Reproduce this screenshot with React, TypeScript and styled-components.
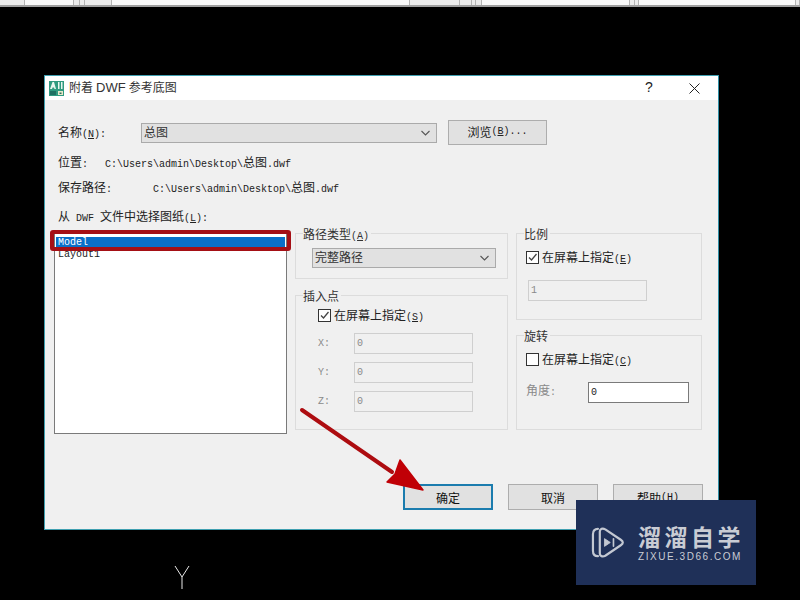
import React from 'react';
import styled, { createGlobalStyle } from 'styled-components';

const GlobalStyle = createGlobalStyle`
  html, body {
    margin: 0;
    padding: 0;
    background: #000;
  }
  body {
    font-family: "Noto Sans CJK SC", "Liberation Sans", sans-serif;
    font-size: 12px;
    color: #222;
  }
`;

const Screen = styled.div`
  position: relative;
  width: 800px;
  height: 600px;
  overflow: hidden;
  background: #000;
`;

const TopStrip = styled.div`
  display: flex;
  height: 5px;
  background: #f0f0f0;
  border-bottom: 2px solid #a0a0a0;
`;

const StripCell = styled.div<{ $w: number; $white?: boolean }>`
  width: ${(p) => p.$w}px;
  background: ${(p) => (p.$white ? '#fafafa' : '#ececec')};
  border-right: 1px solid #b4b4b4;
  box-sizing: border-box;
`;

const Dialog = styled.div`
  box-sizing: border-box;
  width: 675px;
  height: 455px;
  margin: 68px 0 0 44px;
  display: flex;
  flex-direction: column;
  background: #f0f0f0;
  border: 1px solid #3f9fb0;
  border-right-color: #2f8fa6;
`;

const TitleBar = styled.div`
  height: 24px;
  flex: none;
  display: flex;
  align-items: center;
  background: #fff;
  padding-left: 4px;
`;

const TitleText = styled.span`
  margin: 0 0 3px 5px;
  font-size: 12px;
  color: #333;
`;

const TitleLatin = styled.span`
  margin: 0 3px;
  font-family: "Liberation Sans", sans-serif;
  font-size: 13px;
`;

const TitleHelp = styled.span`
  margin: 0 0 2px auto;
  width: 12px;
  text-align: center;
  font-family: "Liberation Sans", sans-serif;
  font-size: 14px;
  color: #222;
`;

const TitleClose = styled.svg`
  margin: 0 18px 0 34px;
  flex: none;
`;

const Mono = styled.span`
  font-family: "Liberation Mono", monospace;
  font-size: 10px;
`;

const Underlined = styled.span`
  text-decoration: underline;
`;

// access key written the way the dialog does it: (N)
const Hot = ({ k }: { k: string }) => (
  <Mono>(<Underlined>{k}</Underlined>)</Mono>
);

const NameRow = styled.div`
  display: flex;
  align-items: center;
  height: 25px;
  margin-top: 20px;
  padding-left: 13px;
`;

const NameLabel = styled.span`
  width: 83px;
  margin-bottom: 2px;
`;

const Combo = styled.div<{ $w: number }>`
  box-sizing: border-box;
  width: ${(p) => p.$w}px;
  height: 20px;
  line-height: 16px;
  display: flex;
  align-items: center;
  justify-content: space-between;
  padding: 0 6px 0 2px;
  background: #e1e1e1;
  border: 1px solid #aaa;
  color: #333;
`;

const ComboText = styled.span`
  margin-bottom: 2px;
`;

const BrowseButton = styled.div`
  box-sizing: border-box;
  width: 99px;
  height: 25px;
  margin-left: 11px;
  padding-bottom: 2px;
  display: flex;
  align-items: center;
  justify-content: center;
  background: #e1e1e1;
  border: 1px solid #adadad;
`;

const InfoRow = styled.div<{ $top: number }>`
  display: flex;
  height: 16px;
  line-height: 14px;
  margin-top: ${(p) => p.$top}px;
  padding-left: 13px;
  white-space: nowrap;
`;

const InfoLabel = styled.span<{ $w: number }>`
  width: ${(p) => p.$w}px;
  flex: none;
`;

const Main = styled.div`
  display: flex;
  align-items: flex-start;
  gap: 8px;
  margin-top: 7px;
  padding-left: 9px;
`;

const ListBox = styled.div`
  position: relative;
  box-sizing: border-box;
  width: 233px;
  height: 202px;
  padding: 4px 1px 0;
  background: #fff;
  border: 1px solid #7a7a7a;
  flex: none;
`;

const ListItem = styled.div<{ $selected?: boolean }>`
  height: ${(p) => (p.$selected ? 12 : 14)}px;
  line-height: 12px;
  padding-left: 2px;
  font-family: "Liberation Mono", monospace;
  font-size: 10px;
  background: ${(p) => (p.$selected ? '#0a6fc8' : 'transparent')};
  color: ${(p) => (p.$selected ? '#fff' : '#222')};
`;

const Highlight = styled.div`
  position: absolute;
  left: -5px;
  top: -3px;
  width: 241px;
  height: 21px;
  box-sizing: border-box;
  border: 4px solid #a50f15;
  border-radius: 3px;
`;

const Column = styled.div<{ $w: number; $gap: number }>`
  width: ${(p) => p.$w}px;
  display: flex;
  flex-direction: column;
  gap: ${(p) => p.$gap}px;
  margin-top: 1px;
  flex: none;
`;

const Group = styled.div<{ $h: number; $pl: number; $pt: number }>`
  position: relative;
  box-sizing: border-box;
  height: ${(p) => p.$h}px;
  padding: ${(p) => p.$pt}px 0 0 ${(p) => p.$pl}px;
  border: 1px solid #dcdcdc;
`;

const Legend = styled.span`
  position: absolute;
  left: 7px;
  top: -8px;
  line-height: 16px;
  padding-right: 2px;
  background: #f0f0f0;
  color: #333;
`;

const CheckRow = styled.div`
  display: flex;
  align-items: center;
  gap: 3px;
  height: 13px;
  white-space: nowrap;
`;

const CheckLabel = styled.span`
  line-height: 13px;
`;

const CheckBox = styled.span`
  box-sizing: border-box;
  width: 13px;
  height: 13px;
  display: flex;
  background: #fff;
  border: 1px solid #333;
`;

const FieldRow = styled.div<{ $top: number; $left?: number }>`
  display: flex;
  align-items: center;
  height: 21px;
  margin-top: ${(p) => p.$top}px;
  margin-left: ${(p) => p.$left ?? 0}px;
`;

const FieldLabel = styled.span<{ $w: number }>`
  width: ${(p) => p.$w}px;
  flex: none;
  line-height: 14px;
  margin-bottom: 2px;
  color: #8a8a8a;
`;

const AxisLabel = styled(FieldLabel)`
  font-family: "Liberation Mono", monospace;
  font-size: 10px;
  line-height: 10px;
  margin-bottom: 0;
`;

const Field = styled.div<{ $w: number; $enabled?: boolean }>`
  box-sizing: border-box;
  width: ${(p) => p.$w}px;
  height: 21px;
  line-height: 19px;
  padding-left: 2px;
  font-family: "Liberation Mono", monospace;
  font-size: 10px;
  background: ${(p) => (p.$enabled ? '#fff' : '#f0f0f0')};
  border: 1px solid ${(p) => (p.$enabled ? '#7a7a7a' : '#cfcfcf')};
  color: ${(p) => (p.$enabled ? '#222' : '#8a8a8a')};
`;

const Footer = styled.div`
  display: flex;
  justify-content: flex-end;
  gap: 15px;
  margin-top: 50px;
  padding-right: 15px;
`;

const DialogButton = styled.div<{ $primary?: boolean }>`
  box-sizing: border-box;
  width: 90px;
  height: 26px;
  display: flex;
  align-items: center;
  justify-content: center;
  background: #e1e1e1;
  color: #111;
  border: ${(p) => (p.$primary ? '2px solid #1b7cae' : '1px solid #adadad')};
`;

const Overlay = styled.svg`
  position: absolute;
  left: 0;
  top: 0;
  pointer-events: none;
`;

const AxisMark = styled.svg`
  position: absolute;
  left: 172px;
  top: 564px;
`;

const Watermark = styled.div`
  position: absolute;
  left: 576px;
  top: 500px;
  width: 180px;
  height: 85px;
  box-sizing: border-box;
  padding: 24px 0 0 15px;
  display: flex;
  gap: 13px;
  background: #1f3058;
  color: #c9ccd4;
`;

const LogoMark = styled.svg`
  margin-top: 3px;
  flex: none;
`;

const BrandText = styled.div`
  display: flex;
  flex-direction: column;
`;

const BrandName = styled.span`
  font-size: 23px;
  font-weight: 700;
  line-height: 24px;
  letter-spacing: 3.5px;
  white-space: nowrap;
`;

const BrandUrl = styled.span`
  margin-top: 3px;
  font-family: "Liberation Sans", sans-serif;
  font-size: 10px;
  line-height: 12px;
  letter-spacing: 1.55px;
  white-space: nowrap;
`;

const CheckMark = () => (
  <svg width="11" height="11" viewBox="0 0 11 11">
    <path d="M2 5.5 L4.5 8 L9.5 2" fill="none" stroke="#444" strokeWidth="1.3" />
  </svg>
);

const ChevronDown = () => (
  <svg width="9" height="6" viewBox="0 0 9 6">
    <path d="M0.5 1 L4.5 5 L8.5 1" fill="none" stroke="#555" strokeWidth="1.1" />
  </svg>
);

const AppIcon = () => (
  <svg width="15" height="15" viewBox="0 0 15 15">
    <rect width="15" height="15" fill="#2f9a80" />
    <path d="M1 8 L3.5 1 H5 L7 8 H5.5 L5 6.5 H3.5 L3 8 Z" fill="#e8f5ef" />
    <rect x="9" y="1" width="1.5" height="7" fill="#e8f5ef" />
    <rect x="12" y="1" width="1.5" height="7" fill="#e8f5ef" />
    <rect x="1" y="10" width="6" height="4" fill="#1f6f62" />
    <rect x="9" y="10" width="5" height="4" fill="#e8e8c8" />
    <rect x="10.5" y="11.5" width="2" height="1.5" fill="#2a6a5c" />
  </svg>
);

const Logo = () => (
  <LogoMark width="34" height="31" viewBox="0 0 36 34" fill="none" stroke="#c3c8d2" strokeWidth="2.4" strokeLinejoin="round" strokeLinecap="round">
    <path d="M7 2 C3 2 1.5 5 1.5 8 V26 C1.5 29 3 32 7 32" />
    <path d="M9 5 C9 2 12 1 15 2.6 L32 14 C35 16 35 18 32 20 L15 31.5 C12 33 9 32 9 29 Z" />
    <path d="M14.5 13 L20.5 17 L14.5 21 Z" fill="#c3c8d2" strokeWidth="1" />
    <path d="M24 13 V21" strokeWidth="1.8" />
  </LogoMark>
);

const stripCells: Array<[number, boolean]> = [
  [25, false], [49, true], [6, false], [5, false], [27, false], [298, true],
  [50, false], [12, false], [4, false], [6, false], [148, true], [5, false], [4, false], [157, true], [4, false],
];

export default function App() {
  return (
    <Screen>
      <GlobalStyle />
      <TopStrip>
        {stripCells.map(([w, white], i) => (
          <StripCell key={i} $w={w} $white={white} />
        ))}
      </TopStrip>

      <Dialog>
        <TitleBar>
          <AppIcon />
          <TitleText>附着<TitleLatin>DWF</TitleLatin>参考底图</TitleText>
          <TitleHelp>?</TitleHelp>
          <TitleClose width="11" height="11" viewBox="0 0 11 11">
            <path d="M0.5 0.5 L10.5 10.5 M10.5 0.5 L0.5 10.5" stroke="#222" strokeWidth="1" />
          </TitleClose>
        </TitleBar>

        <NameRow>
          <NameLabel>名称<Hot k="N" /><Mono>:</Mono></NameLabel>
          <Combo $w={296}>
            <ComboText>总图</ComboText>
            <ChevronDown />
          </Combo>
          <BrowseButton>浏览<Hot k="B" /><Mono>...</Mono></BrowseButton>
        </NameRow>

        <InfoRow $top={10}>
          <InfoLabel $w={47}>位置<Mono>:</Mono></InfoLabel>
          <span><Mono>C:\Users\admin\Desktop\</Mono>总图<Mono>.dwf</Mono></span>
        </InfoRow>
        <InfoRow $top={9}>
          <InfoLabel $w={95}>保存路径<Mono>:</Mono></InfoLabel>
          <span><Mono>C:\Users\admin\Desktop\</Mono>总图<Mono>.dwf</Mono></span>
        </InfoRow>
        <InfoRow $top={13}>
          <span>从<Mono> DWF </Mono>文件中选择图纸<Hot k="L" /><Mono>:</Mono></span>
        </InfoRow>

        <Main>
          <ListBox>
            <ListItem $selected>Model</ListItem>
            <ListItem>Layout1</ListItem>
            <Highlight />
          </ListBox>

          <Column $w={213} $gap={16}>
            <Group $h={46} $pl={16} $pt={14}>
              <Legend>路径类型<Hot k="A" /></Legend>
              <Combo $w={184}>
                <ComboText>完整路径</ComboText>
                <ChevronDown />
              </Combo>
            </Group>
            <Group $h={135} $pl={22} $pt={13}>
              <Legend>插入点</Legend>
              <CheckRow>
                <CheckBox><CheckMark /></CheckBox>
                <CheckLabel>在屏幕上指定<Hot k="S" /></CheckLabel>
              </CheckRow>
              <FieldRow $top={11}>
                <AxisLabel $w={36}>X:</AxisLabel>
                <Field $w={119}>0</Field>
              </FieldRow>
              <FieldRow $top={8}>
                <AxisLabel $w={36}>Y:</AxisLabel>
                <Field $w={119}>0</Field>
              </FieldRow>
              <FieldRow $top={8}>
                <AxisLabel $w={36}>Z:</AxisLabel>
                <Field $w={119}>0</Field>
              </FieldRow>
            </Group>
          </Column>

          <Column $w={186} $gap={15}>
            <Group $h={87} $pl={9} $pt={17}>
              <Legend>比例</Legend>
              <CheckRow>
                <CheckBox><CheckMark /></CheckBox>
                <CheckLabel>在屏幕上指定<Hot k="E" /></CheckLabel>
              </CheckRow>
              <FieldRow $top={16} $left={2}>
                <Field $w={119}>1</Field>
              </FieldRow>
            </Group>
            <Group $h={95} $pl={9} $pt={17}>
              <Legend>旋转</Legend>
              <CheckRow>
                <CheckBox />
                <CheckLabel>在屏幕上指定<Hot k="C" /></CheckLabel>
              </CheckRow>
              <FieldRow $top={16}>
                <FieldLabel $w={62}>角度<Mono>:</Mono></FieldLabel>
                <Field $w={101} $enabled>0</Field>
              </FieldRow>
            </Group>
          </Column>
        </Main>

        <Footer>
          <DialogButton $primary>确定</DialogButton>
          <DialogButton>取消</DialogButton>
          <DialogButton>帮助<Hot k="H" /></DialogButton>
        </Footer>
      </Dialog>

      <Overlay width="800" height="600" viewBox="0 0 800 600">
        <path d="M302 410 L392 472" stroke="#ad0c10" strokeWidth="4" strokeLinecap="round" />
        <path d="M400 460 L423 490 L387 482 L395 474 Z" fill="#c00006" stroke="#c00006" strokeWidth="1.5" strokeLinejoin="round" />
      </Overlay>

      <AxisMark width="20" height="26" viewBox="0 0 20 26">
        <path d="M3 2 L10 13 L17 2 M10 13 V25" fill="none" stroke="#e8e8e8" strokeWidth="1" />
      </AxisMark>

      <Watermark>
        <Logo />
        <BrandText>
          <BrandName>溜溜自学</BrandName>
          <BrandUrl>ZIXUE.3D66.COM</BrandUrl>
        </BrandText>
      </Watermark>
    </Screen>
  );
}
